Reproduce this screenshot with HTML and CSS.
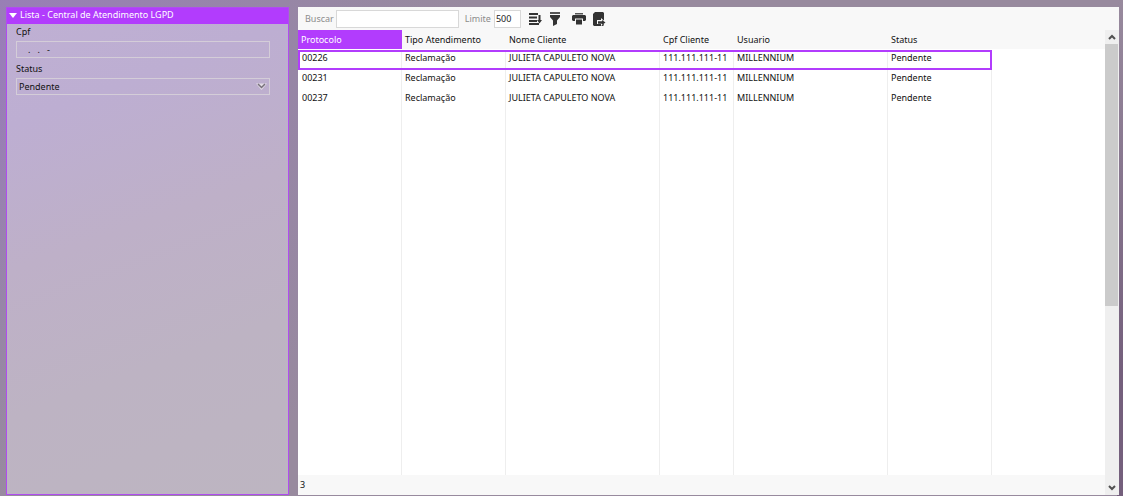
FILE: index.html
```html
<!DOCTYPE html>
<html lang="pt-BR">
<head>
<meta charset="utf-8">
<title>Lista - Central de Atendimento LGPD</title>
<link rel="stylesheet" href="styles.css">
</head>
<body>
<div class="desktop">
  <aside class="filters">
    <h1 class="filters-title">
      <svg width="8" height="5" viewBox="0 0 8 5" aria-hidden="true"><path d="M0 0h8L4 5z" fill="#fff"/></svg>
      Lista - Central de Atendimento LGPD
    </h1>
    <form class="filters-form">
      <label for="cpf">Cpf</label>
      <input id="cpf" class="field cpf" type="text" value="   .   .   -">
      <label for="status">Status</label>
      <div class="select-wrap">
        <select id="status" class="field"><option>Pendente</option></select>
        <svg class="select-arrow" width="11" height="7" viewBox="0 0 11 7" aria-hidden="true"><path d="M0 .5h11L5.500 7z" fill="#e3dde6"/><path d="M2 1l3.500 3.500L9 1" fill="none" stroke="#77707b" stroke-width="1.500"/></svg>
      </div>
    </form>
  </aside>
  <main class="list">
    <div class="toolbar">
      <label for="search">Buscar</label>
      <input id="search" class="search" type="text">
      <label for="limit">Limite</label>
      <input id="limit" class="limit" type="text" value="500">
      <div class="actions">
        <button type="button" aria-label="Ordenar"><svg width="14" height="14" viewBox="0 0 14 14"><path d="M1 1h9v2H1zM1 4.500h8v2H1zM1 8h8v2H1zM1 11h10v2H1zM10.500 3h2v5H14l-2.500 3.500L9 8h1.500z" fill="#333"/></svg></button>
        <button type="button" aria-label="Filtrar"><svg width="14" height="14" viewBox="0 0 14 14"><path d="M2 0h10v2H2z" fill="#555"/><path d="M2 3h10v2L9 8.500V12l-4 2V8.500L2 5z" fill="#333"/></svg></button>
        <button type="button" class="print" aria-label="Imprimir"><svg width="14" height="14" viewBox="0 0 14 14"><path d="M3 1h8v1.500H3z" fill="#555"/><path d="M1 3h12l1 1v4l-1 1h-2V6.500H3V9H1L0 8V4z M4 7.500h6v5H4z" fill="#333"/></svg></button>
        <button type="button" aria-label="Exportar"><svg width="14" height="14" viewBox="0 0 14 14"><path d="M3 0h8l1 1v12l-1 1H2l-1-1V2z" fill="#333"/><path d="M5 8h4V6l5 4.500L9 14v-2H5z" fill="#f8f8f8"/><path d="M6 9.300h4V8l3.500 2.500L10 13v-1.300H6z" fill="#333"/><path d="M2 12h7v2H2z" fill="#333"/></svg></button>
      </div>
    </div>
    <div class="body">
      <div class="content">
        <div class="table-area">
          <table class="grid">
            <colgroup><col class="c-md"><col class="c-md"><col class="c-lg"><col class="c-sm"><col class="c-lg"><col class="c-md"></colgroup>
            <thead><tr><th class="sorted">Protocolo</th><th>Tipo Atendimento</th><th>Nome Cliente</th><th>Cpf Cliente</th><th>Usuario</th><th>Status</th></tr></thead>
            <tbody>
              <tr class="row selected"><td>00226</td><td>Reclamação</td><td>JULIETA CAPULETO NOVA</td><td>111.111.111-11</td><td>MILLENNIUM</td><td>Pendente</td></tr>
              <tr class="row"><td>00231</td><td>Reclamação</td><td>JULIETA CAPULETO NOVA</td><td>111.111.111-11</td><td>MILLENNIUM</td><td>Pendente</td></tr>
              <tr class="row"><td>00237</td><td>Reclamação</td><td>JULIETA CAPULETO NOVA</td><td>111.111.111-11</td><td>MILLENNIUM</td><td>Pendente</td></tr>
              <tr class="filler"><td></td><td></td><td></td><td></td><td></td><td></td></tr>
            </tbody>
          </table>
        </div>
        <footer class="count">3</footer>
      </div>
      <div class="scrollbar">
        <button type="button" aria-label="Rolar para cima"><svg width="8" height="6" viewBox="0 0 8 6"><path d="M1 5l3-3 3 3" fill="none" stroke="#505050" stroke-width="2"/></svg></button>
        <div class="track"><div class="thumb"></div></div>
        <button type="button" aria-label="Rolar para baixo"><svg width="8" height="6" viewBox="0 0 8 6"><path d="M1 1l3 3 3-3" fill="none" stroke="#505050" stroke-width="2"/></svg></button>
      </div>
    </div>
  </main>
</div>
</body>
</html>
```

FILE: styles.css
```css
* { box-sizing: border-box; }
body {
  margin: 0;
  background: #fff;
  color: #111;
  font: 9px/16px "Noto Sans", "Open Sans", sans-serif;
}
input, select, button { font: inherit; color: inherit; margin: 0; }
button { display: flex; align-items: center; justify-content: center; padding: 0; border: 0; background: none; }
svg { display: block; flex: none; }

.desktop {
  display: grid;
  grid-template-columns: minmax(200px, 283fr) minmax(0, 821fr);
  gap: 9px;
  height: 100vh;
  padding: 7px 4px 1px 6px;
  border: solid #fff;
  border-width: 0 1px 1px 0;
  background:
    linear-gradient(to bottom, #988a9e, #745f7c 75%) right / 6px 100% no-repeat,
    radial-gradient(ellipse 480px 460px at 0 60px, #997db9, #9786a6 60%, #988a9e);
}

.filters {
  border: 1px solid #b04cf0;
  background: linear-gradient(160deg, #bfb0d3, #bdaed2 20%, #beb0c8 45%, #bdb3c3 70%, #bdb5c1);
}
.filters-title {
  display: flex;
  align-items: center;
  gap: 3px;
  margin: 0;
  padding: 0 2px 2px;
  background: #b23cfd;
  color: #fff;
  font: inherit;
  line-height: 14px;
  white-space: nowrap;
}
.filters-form { display: flex; flex-direction: column; padding: 0 18px 0 9px; }
.filters-form label { padding-bottom: 1px; }
.field {
  width: 100%;
  height: 17px;
  padding: 0 2px;
  border: 1px solid #d4cdd8;
  border-radius: 0;
  background: transparent;
  appearance: none;
}
.cpf { margin-bottom: 3px; padding-left: 4px; white-space: pre; }
.select-wrap { display: grid; align-items: center; }
.select-wrap > * { grid-area: 1 / 1; }
.select-arrow { justify-self: end; margin-right: 3px; pointer-events: none; }

.list { display: flex; flex-direction: column; min-width: 0; background: #f8f8f8; }
.toolbar { display: flex; align-items: center; height: 23px; padding-left: 7px; color: #8c8c8c; }
.toolbar input { height: 18px; border: 1px solid #d8d8d8; background: #fff; color: #222; padding: 0 1px; }
.toolbar .search { width: 123px; margin: 0 6px 0 2px; }
.toolbar .limit { width: 27px; margin-left: 3px; }
.actions { display: flex; gap: 6px; margin-left: 7px; }
.actions .print { margin-left: 4px; }

.body { display: flex; flex: 1; min-height: 0; }
.content { display: flex; flex: 1; flex-direction: column; min-width: 0; }
.table-area { flex: 1; min-height: 0; background: linear-gradient(#f8f8f8 19px, #fff 19px); }
.grid { width: 694px; height: 100%; table-layout: fixed; border-collapse: separate; border-spacing: 0; }
.c-sm { width: 74px; }
.c-md { width: 104px; }
.c-lg { width: 154px; }
.grid th { height: 20px; padding: 0 3px; border-bottom: 1px solid #fff; font-weight: 400; text-align: left; white-space: nowrap; }
.grid th.sorted { background: #b23cfd; color: #fff; }
.grid td { padding: 0 0 4px 3px; border-right: 1px solid #eee; white-space: nowrap; }
.grid td:first-child { padding-left: 4px; }
.row { height: 20px; }
.selected { outline: 2px solid #b23cfd; outline-offset: -2px; }
.count { height: 20px; padding: 2px; }

.scrollbar { display: flex; flex-direction: column; width: 14px; background: #efefef; }
.scrollbar button { height: 14px; }
.track { flex: 1; }
.thumb { height: 60%; margin-right: 1px; background: #cbcbcb; }
```
